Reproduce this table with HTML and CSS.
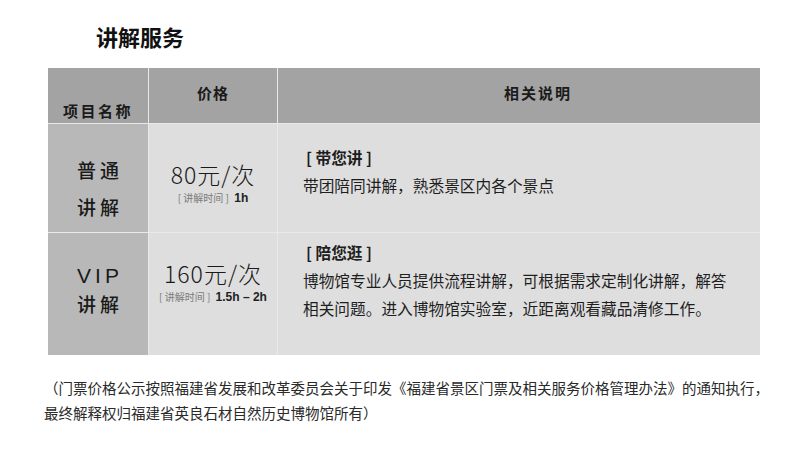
FILE: index.html
```html
<!DOCTYPE html>
<html lang="zh-CN">
<head>
    <meta charset="UTF-8">
    <meta name="viewport" content="width=device-width, initial-scale=1.0">
    <title>讲解服务</title>
    <link rel="stylesheet" href="styles.css">
</head>
<body>

    <div class="page">
        <h1 class="title">讲解服务</h1>

        <div class="price-table">
            <!-- Header -->
            <div class="cell head head-name">项目名称</div>
            <div class="cell head head-price">价格</div>
            <div class="cell head head-desc">相关说明</div>

            <!-- Normal -->
            <div class="cell name name-normal">
                <span>普通</span>
                <span>讲解</span>
            </div>
            <div class="cell price price-normal">
                <div class="amount">80元/次</div>
                <div class="duration"><span class="label">[ 讲解时间 ]</span> <b>1h</b></div>
            </div>
            <div class="cell desc desc-normal">
                <div class="desc-title">[ 带您讲 ]</div>
                <p>带团陪同讲解，熟悉景区内各个景点</p>
            </div>

            <!-- VIP -->
            <div class="cell name name-vip">
                <span class="vip">VIP</span>
                <span>讲解</span>
            </div>
            <div class="cell price price-vip">
                <div class="amount">160元/次</div>
                <div class="duration"><span class="label">[ 讲解时间 ]</span> <b>1.5h – 2h</b></div>
            </div>
            <div class="cell desc desc-vip">
                <div class="desc-title">[ 陪您逛 ]</div>
                <p>博物馆专业人员提供流程讲解，可根据需求定制化讲解，解答<br>相关问题。进入博物馆实验室，近距离观看藏品清修工作。</p>
            </div>
        </div>

        <p class="note">（门票价格公示按照福建省发展和改革委员会关于印发《福建省景区门票及相关服务价格管理办法》的通知执行，<br>最终解释权归福建省英良石材自然历史博物馆所有）</p>
    </div>

</body>
</html>
```

FILE: styles.css
```css
body {
    margin: 0;
    padding: 0;
    background-color: #ffffff;
    color: #1e1e1e;
    font-family: "Noto Sans CJK SC", "Noto Sans", sans-serif;
}

.page {
    width: 800px;
    height: 455px;
    overflow: hidden;
}

.title {
    margin: 21px 0 17px 96px;
    font-size: 22px;
    line-height: 30px;
    font-weight: 700;
    color: #111;
}

/* Table */
.price-table {
    display: grid;
    grid-template-columns: 100px 128px 482px;
    grid-template-rows: 55px 108px 122px;
    column-gap: 1px;
    row-gap: 1px;
    width: 712px;
    margin-left: 48px;
    background: #e9e9e9;
}

.cell {
    display: flex;
    flex-direction: column;
}

.head {
    background: #a3a3a3;
    font-size: 15px;
    font-weight: 700;
    letter-spacing: 2px;
    color: #1a1a1a;
    align-items: center;
}

.head-name {
    justify-content: flex-end;
    padding-bottom: 2px;
    line-height: 20px;
    letter-spacing: 2.5px;
}

.head-price,
.head-desc {
    justify-content: center;
    line-height: 20px;
    padding-bottom: 6px;
    letter-spacing: 1px;
}

.head-desc {
    padding-left: 38px;
    letter-spacing: 2px;
}

.name {
    background: #b8b8b8;
    align-items: center;
    font-size: 19px;
    font-weight: 500;
    letter-spacing: 4px;
    padding-left: 4px;
    color: #1a1a1a;
}

.name-normal {
    padding-top: 27px;
    line-height: 37px;
}

.name-vip {
    padding-top: 29px;
    line-height: 28px;
}

.vip {
    font-family: "Liberation Sans", sans-serif;
    font-size: 21px;
    letter-spacing: 4px;
}

.price {
    background: #dedede;
    align-items: center;
}

.price-normal {
    padding-top: 36px;
}

.price-vip {
    padding-top: 26px;
}

.amount {
    font-size: 23px;
    line-height: 28px;
    font-weight: 300;
    letter-spacing: 1px;
    color: #1a1a1a;
}

.duration {
    margin-top: 3px;
    font-size: 10px;
    line-height: 14px;
}

.duration .label {
    color: #7a7a7a;
    margin-right: 3px;
}

.duration b {
    font-family: "Liberation Sans", sans-serif;
    font-size: 12px;
    color: #222;
}

.desc {
    background: #dedede;
    padding-left: 25px;
    font-size: 15.7px;
    line-height: 28px;
}

.desc-normal {
    padding-top: 20px;
}

.desc-vip {
    padding-top: 6px;
}

.desc-title {
    font-weight: 700;
    padding-left: 3px;
}

.desc p {
    margin: 0;
}

/* Footer note */
.note {
    margin: 20px 0 0 44px;
    font-size: 14.5px;
    line-height: 25px;
    color: #2a2a2a;
}
```
